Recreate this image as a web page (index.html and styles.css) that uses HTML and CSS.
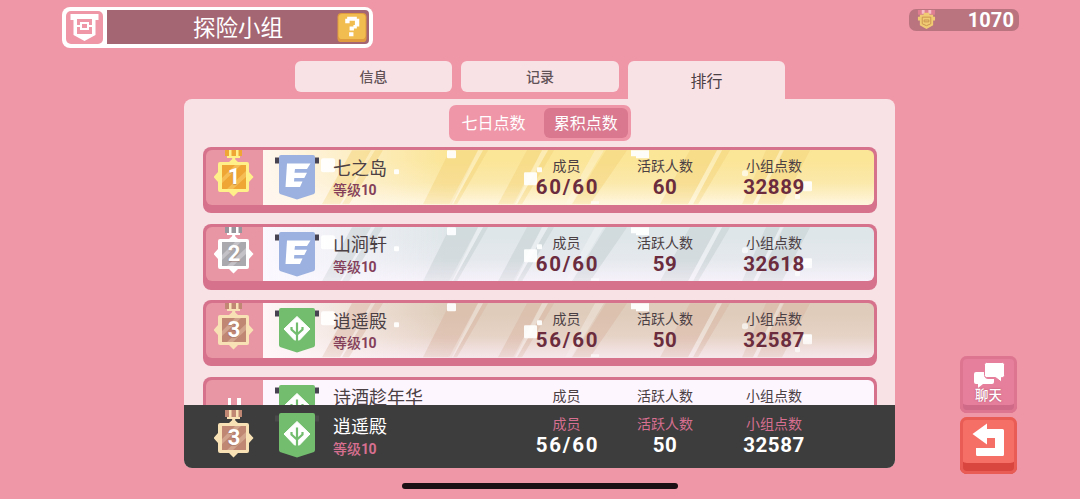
FILE: index.html
```html
<!DOCTYPE html>
<html lang="zh-CN">
<head>
<meta charset="utf-8">
<title>探险小组</title>
<link rel="stylesheet" href="styles.css">
</head>
<body>
<svg class="defs" aria-hidden="true">
  <symbol id="stripes" viewBox="0 0 611 54">
    <g fill="currentColor">
      <path d="M89 0h19l-31 54h-18zM112 0h8l-34 54h-7zM187 0h28l-26 54h-29zM220 0h5l-31 54h-4zM264 0h15l-27 54h-17zM285 0h6l-32 54h-5zM343 0h21l-37 54h-18zM427 0h27l-29 54h-28zM459 0h8l-32 54h-5zM503 0h14l-27 54h-11zM520 0h27l-28 54h-25z"/>
    </g>
    <g fill="#fff" opacity=".28"><path d="M215 0h5l-30 54h-4zM279 0h6l-31 54h-4zM332 0h9l-33 54h-6zM454 0h5l-29 54h-5zM517 0h4l-27 54h-4z"/></g>
    <g fill="#fff" opacity=".93">
      <rect x="58" y="8" width="14" height="14" rx="2"/><rect x="131" y="19" width="5" height="5" rx="1"/>
      <rect x="184" y="0" width="9" height="8" rx="1"/><rect x="261" y="22" width="13" height="13" rx="1"/>
      <rect x="274" y="17" width="5" height="5" rx="1"/><rect x="328" y="51" width="8" height="3"/>
      <path d="M368 0h18v8h-13v-2h-5z"/><rect x="479" y="20" width="6" height="6" rx="2" opacity=".7"/>
      <rect x="540" y="31" width="9" height="10" rx="1"/><rect x="532" y="44" width="5" height="5" rx="1"/>
    </g>
  </symbol>
  <symbol id="flag-e" viewBox="0 0 46 46">
    <path fill="#484350" d="M1 3.500h5v6h-5zM40 3.500h5v6h-5z"/>
    <path fill="#9cb1df" d="M5 3q0-2 2-2h32q2 0 2 2v35q0 1-1 2l-17 5.500-17-5.500q-1-1-1-2z"/>
    <path fill="#fff" d="M13 9.500h23.500l-3.500 5.500h-12l-.5 3.700h12.500l-2.700 5.300h-10l-.3 3.500h8.500l-2.500 5.500h-14.500z"/>
  </symbol>
  <symbol id="flag-leaf" viewBox="0 0 46 46">
    <path class="rod" d="M1 3.500h5v6h-5zM40 3.500h5v6h-5z"/>
    <path fill="#72bd6e" d="M5 3q0-2 2-2h32q2 0 2 2v35q0 1-1 2l-17 5.500-17-5.500q-1-1-1-2z"/>
    <path fill="#fff" stroke="#fff" stroke-width="1" stroke-linejoin="round" d="M23 9.500l13 12.500-10.500 11h-5l-10.500-11z"/>
    <path fill="none" stroke="#72bd6e" stroke-width="2.200" d="M23 15.500v19M17.500 20v2.500l5.500 5 5.500-5v-2.500"/>
  </symbol>
  <symbol id="medal" viewBox="0 0 40 48">
    <path class="m-ribbon" d="M11 0h17v7h-17z"/>
    <path class="m-edge" d="M15 0h2.500v7h-2.500zM22 0h2.500v7h-2.500zM13 7h13v2h-13zM18.200 7h3v7h-3z"/>
    <path class="m-edge" d="M19.500 9l4.500 4h9q2 0 2 2v8l4.500 5-4.500 5v8q0 2-2 2h-9l-4.500 4.500-4.500-4.500h-9q-2 0-2-2v-8l-4.500-5 4.500-5v-8q0-2 2-2h9z"/>
    <path class="m-face" d="M8 16h24v24h-24z"/>
    <path class="m-shine" d="M8 29l13-13h6l-19 18zM13 40l19-18v6l-13 12z"/>
  </symbol>
</svg>

<header class="topbar">
  <div class="title">
    <svg class="title-icon" viewBox="0 0 37 33">
      <rect width="37" height="33" rx="5" fill="#ef97a6"/>
      <path fill="#fff" d="M4.500 3h28v6h-3v15l-11 6-11-6v-15h-3z"/>
      <path fill="#ef97a6" d="M11 8h15v15h-15z"/>
      <path fill="#fff" d="M11 14h15v2h-15z"/>
      <path fill="#ef97a6" stroke="#fff" stroke-width="2" d="M15 12h7v6h-7z"/>
    </svg>
    <h1>探险小组</h1>
    <svg class="help" viewBox="0 0 30 30">
      <rect width="30" height="30" rx="4" fill="#df9b3e"/><rect x="1" y="1" width="28" height="26" rx="4" fill="#f2bd50"/>
      <path fill="#fff" d="M8 6h2v-2h10v2h2.500v8h-2.500v2h-3v2h-4.500v-4h4v-1.500h1.500v-4.500h-5.500v2.500h-4.500zM12 20h4.500v4h-4.500z"/>
    </svg>
  </div>
  <div class="coins">
    <svg viewBox="0 0 20 22">
      <path fill="#df7f91" d="M1 1h18v5h-18z"/><path fill="#f7c0c9" d="M5 1h3v4h-3zM12 1h3v4h-3z"/>
      <path fill="#f1cb74" d="M7 4h6v2h4v2h2v4h-2v5l-7 4-7-4v-5h-2v-4h2v-2h4z"/>
      <path fill="none" stroke="#c99350" d="M5.500 8.500h9v7l-4.500 2-4.500-2zM7.500 11.500h5v2h-5z"/>
    </svg>
    <span>1070</span>
  </div>
</header>

<div class="screen">
  <main>
    <nav class="tabs"><a>信息</a><a>记录</a><a class="current">排行</a></nav>
    <section class="panel">
      <div class="toggle"><span>七日点数</span><span class="on">累积点数</span></div>
      <div class="list">
        <article class="row gold">
          <div class="rank"><svg><use href="#medal"/></svg><b>1</b></div>
          <div class="card"><svg class="pattern"><use href="#stripes"/></svg>
            <svg class="flag"><use href="#flag-e"/></svg>
            <div class="who"><h2>七之岛</h2><p>等级<b>10</b></p></div>
            <dl><dt>成员</dt><dd class="ratio">60/60</dd></dl><dl><dt>活跃人数</dt><dd>60</dd></dl><dl><dt>小组点数</dt><dd>32889</dd></dl>
          </div>
        </article>
        <article class="row silver">
          <div class="rank"><svg><use href="#medal"/></svg><b>2</b></div>
          <div class="card"><svg class="pattern"><use href="#stripes"/></svg>
            <svg class="flag"><use href="#flag-e"/></svg>
            <div class="who"><h2>山涧轩</h2><p>等级<b>10</b></p></div>
            <dl><dt>成员</dt><dd class="ratio">60/60</dd></dl><dl><dt>活跃人数</dt><dd>59</dd></dl><dl><dt>小组点数</dt><dd>32618</dd></dl>
          </div>
        </article>
        <article class="row bronze">
          <div class="rank"><svg><use href="#medal"/></svg><b>3</b></div>
          <div class="card"><svg class="pattern"><use href="#stripes"/></svg>
            <svg class="flag"><use href="#flag-leaf"/></svg>
            <div class="who"><h2>逍遥殿</h2><p>等级<b>10</b></p></div>
            <dl><dt>成员</dt><dd class="ratio">56/60</dd></dl><dl><dt>活跃人数</dt><dd>50</dd></dl><dl><dt>小组点数</dt><dd>32587</dd></dl>
          </div>
        </article>
        <article class="row plain">
          <div class="rank"><i></i><i></i></div>
          <div class="card">
            <svg class="flag"><use href="#flag-leaf"/></svg>
            <div class="who"><h2>诗酒趁年华</h2></div>
            <dl><dt>成员</dt></dl><dl><dt>活跃人数</dt></dl><dl><dt>小组点数</dt></dl>
          </div>
        </article>
      </div>
      <footer class="mine bronze">
        <div class="rank"><svg><use href="#medal"/></svg><b>3</b></div>
        <div class="card">
          <svg class="flag"><use href="#flag-leaf"/></svg>
          <div class="who"><h2>逍遥殿</h2><p>等级<b>10</b></p></div>
          <dl><dt>成员</dt><dd class="ratio">56/60</dd></dl><dl><dt>活跃人数</dt><dd>50</dd></dl><dl><dt>小组点数</dt><dd>32587</dd></dl>
        </div>
      </footer>
    </section>
  </main>
  <aside>
    <button class="chat">
      <svg viewBox="0 0 32 26"><path fill="#fff" d="M3 10h9v4q0 3 3 3h6v3q0 2-2 2h-9l-5 4v-4h-2q-2 0-2-2v-8q0-2 2-2z"/><path fill="#fff" stroke="#e67f9c" stroke-width="1" d="M13.500 .5h16q2 0 2 2v11q0 2-2 2h-1v4.500l-6-4.500h-9q-2 0-2-2v-11q0-2 2-2z"/></svg>
      <span>聊天</span>
    </button>
    <button class="back">
      <svg viewBox="0 0 34 34"><path fill="#fff" d="M.5 11l14.500-10.500v5.500h15.500q1.500 0 1.500 1.500v24q0 1.500-1.500 1.500h-25q-1.500 0-1.500-1.500v-6.500h19v-10h-8v6.500z"/></svg>
    </button>
  </aside>
</div>
<div class="home"></div>
</body>
</html>
```
FILE: styles.css
```css
* { box-sizing: border-box; margin: 0; padding: 0; }
body {
  width: 1080px; height: 499px; overflow: hidden;
  background: #ef97a6; color: #4b4044;
  font-family: "Noto Sans CJK SC", sans-serif;
}
.defs { position: absolute; width: 0; height: 0; }
svg { display: block; flex: none; }
h1, h2 { font-weight: 400; }

.topbar { height: 61px; padding: 6.5px 61px 0 62px; display: flex; justify-content: space-between; align-items: flex-start; }
.title { width: 311px; height: 41px; padding: 4px; background: #fff; border-radius: 8px; display: flex; gap: 4px; align-items: center; position: relative; }
.title-icon { width: 37px; height: 33px; }
.title h1 { flex: 1; height: 34px; line-height: 32px; background: #a46673; color: #fff; text-align: center; font-size: 22.5px; border-radius: 0 4px 4px 0; }
.help { position: absolute; right: 6px; top: 6px; width: 30px; height: 29px; }
.coins { width: 110px; height: 22px; margin-top: 2px; padding: 0 5px 0 8px; border-radius: 7px; background: #b97480; display: flex; align-items: center; justify-content: space-between; }
.coins svg { width: 19px; height: 21px; }
.coins span { color: #fff; font: 700 20px/22px Roboto, sans-serif; letter-spacing: .1px; }

.screen { display: grid; grid-template-columns: 711px 57px; column-gap: 65px; padding-left: 184px; height: 422px; }
.tabs { height: 38px; display: flex; justify-content: center; gap: 9px; padding-left: 1px; }
.tabs a { width: 157.500px; height: 31px; line-height: 30px; text-align: center; font-size: 14px; font-weight: 500; border-radius: 6px; background: #f9e2e6; color: #625357; }
.tabs .current { height: 39px; line-height: 38px; font-size: 16px; font-weight: 400; border-radius: 6px 6px 0 0; color: #4b4044; }
.panel { height: 368.500px; border-radius: 8px; background: #f9e2e6; overflow: hidden; display: flex; flex-direction: column; }
.toggle { width: 182.500px; height: 36px; margin: 6px 0 0 264.500px; padding: 3px; border-radius: 7px; background: #ef97a9; display: flex; color: #fff; font-size: 16px; line-height: 29px; text-align: center; flex: none; }
.toggle span { flex: 1; border-radius: 6px; }
.toggle span:first-child { flex: 0 0 92px; padding-right: 8px; }
.toggle .on { background: #d9788f; }

.list { height: 263.500px; padding: 6px 18.500px 0 19px; overflow: hidden; display: flex; flex-direction: column; gap: 10.600px; }
.row { height: 66px; flex: none; display: flex; padding: 3px 3px 8.500px; border-radius: 8px; background: #d6728c; }
.rank { width: 57px; flex: none; background: #e996a4; border-radius: 6px 0 0 6px; display: grid; justify-items: center; align-items: start; overflow: hidden; }
.rank svg, .rank b { grid-area: 1 / 1; }
.rank svg { width: 40px; height: 48px; margin: -1px 1px 0 0; }
.rank b { font: 700 22px/26px Roboto, sans-serif; color: #fff; margin: 14px 1px 0 0; text-shadow: 0 1px 1px #80504066; }
.card { flex: 1; position: relative; padding: 4px 0 0 11px; border-radius: 0 6px 6px 0; overflow: hidden; display: grid; grid-template-columns: 46px 13px 185px 97px 100px 118px; align-content: start; }
.pattern { position: absolute; left: 0; top: 0; width: 611px; height: 54.500px; mask-image: linear-gradient(#000 60%, #0008); }
.flag { width: 46px; height: 46px; position: relative; }
.who { grid-column: 3; padding-top: 1.500px; position: relative; }
h2 { font-size: 18px; line-height: 22px; }
.who p { margin-top: 1.500px; font-size: 14px; line-height: 20px; font-weight: 500; color: #84405a; }
.who b { font: 700 14px/20px Roboto, sans-serif; letter-spacing: -.6px; }
dl { position: relative; padding-top: 1px; text-align: center; }
dt { font-size: 14px; line-height: 20px; }
dd { font: 700 20.500px/22px Roboto, sans-serif; letter-spacing: .5px; color: #6b2c3e; margin-top: 1.200px; }
dd.ratio { letter-spacing: 1.800px; padding-left: 2px; }

.gold .card { background: linear-gradient(90deg, #fff7ef, #fff7ef00 30%), linear-gradient(#fbe597 20%, #fbe9ab 60%, #fff6df); }
.gold .pattern { color: #f4d47b80; }
.silver .card { background: linear-gradient(90deg, #fbf8ff, #fbf8ff00 30%), linear-gradient(#dfe6e9 20%, #e5e9ee 60%, #f6f1fa); }
.silver .pattern { color: #c3ced080; }
.bronze .card { background: linear-gradient(90deg, #fff7f8, #fff7f800 30%), linear-gradient(#dfccba 20%, #e6d3c6 60%, #f6e7ec); }
.bronze .pattern { color: #d9b5a380; }
.plain .card { background: #fdf6ff; }
.gold { --edge: #fff08a; --face: #efa635; --shine: #f7bd55; --ribbon: #efa635; }
.silver { --edge: #fff; --face: #aaa9ae; --shine: #c4c2c6; --ribbon: #99979d; }
.bronze { --edge: #f8e2b5; --face: #c08772; --shine: #d2a48d; --ribbon: #c08772; }
.m-edge { fill: var(--edge); }
.m-face { fill: var(--face); }
.m-shine { fill: var(--shine); }
.m-ribbon { fill: var(--ribbon); }
.rod { fill: var(--rod, #484350); }
.plain .rank { display: flex; justify-content: center; gap: 6px; padding: 18px 1px 0 0; }
.plain i { width: 3.500px; height: 14px; background: #fff; }

.mine { flex: 1; background: #3d3d3d; display: flex; padding: 5px 21.500px 0 22px; --rod: #4a4a4a; }
.mine .rank, .mine .card { background: none; overflow: visible; }
.mine .rank svg { margin-top: 0; }
.mine .rank b { margin-top: 15px; }
.mine .card { padding-top: 2.500px; }
.mine h2, .mine dd { color: #fff; }
.mine dd { margin-top: .5px; }
.mine .who p, .mine dt { color: #d66f90; }
.mine .who { padding-top: 2px; }

aside { display: flex; flex-direction: column; gap: 4px; padding-top: 295px; }
aside button { width: 57px; height: 57px; border: 0; border-radius: 7px; display: flex; flex-direction: column; align-items: center; font-family: inherit; flex: none; }
.chat { background: #e67f9c; box-shadow: inset 0 0 0 3px #dd7590, inset 0 -8px 0 #cf6a88; padding-top: 6px; }
.chat svg { width: 32px; height: 26px; }
.chat span { color: #fff; font-size: 13.500px; font-weight: 500; line-height: 13px; text-shadow: 0 0 2px #a84f6b; }
.back { background: #f66f66; box-shadow: inset 0 0 0 3px #e85c55, inset 0 -11px 0 #d94640; padding-top: 6px; }
.back svg { width: 34px; height: 34px; }
.home { width: 276px; height: 6px; margin: 0 auto; border-radius: 3px; background: #1b1014; }
```
